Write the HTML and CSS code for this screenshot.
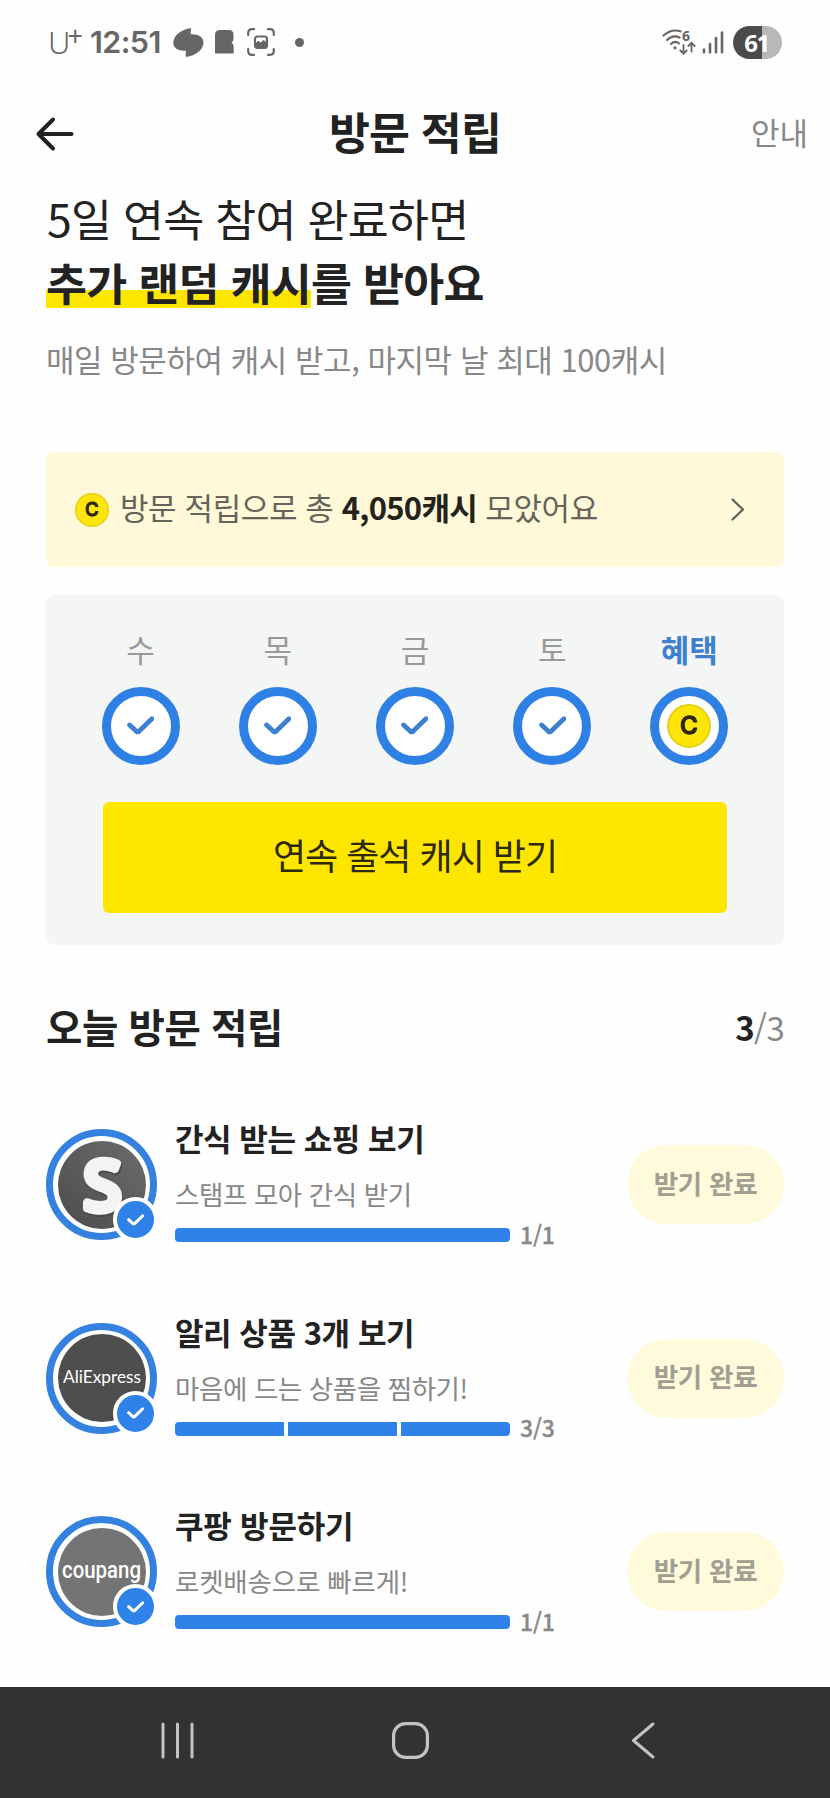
FILE: index.html
```html
<!DOCTYPE html>
<html lang="ko">
<head>
<meta charset="utf-8">
<title>방문 적립</title>
<link rel="stylesheet" href="styles.css">
</head>
<body>
<svg class="defs" aria-hidden="true">
  <defs>
    <symbol id="tick" viewBox="0 0 26 18"><path d="M2.5 8.5 L9 14.6 Q10.3 15.7 11.6 14.6 L24 2.5" fill="none" stroke="currentColor" stroke-width="4.6" stroke-linecap="round" stroke-linejoin="round"/></symbol>
    <symbol id="coin" viewBox="0 0 44 44"><circle cx="22" cy="22" r="21" fill="#ffe50a" stroke="#e6d015" stroke-width="2"/><text x="21.7" y="30.3" class="coin-letter">C</text></symbol>
  </defs>
</svg>
<div class="screen">
  <div class="status">
    <span class="carrier">U<sup>+</sup></span>
    <span class="clock">12:51</span>
    <svg class="ic-swirl" width="31" height="29" viewBox="0 0 31 29"><path d="M18 0 L17.7 6.3 C24 5.6 30.5 8.5 30.5 14.5 C30.5 22 22 28.5 12.5 28.8 L13 22.7 C6 23.3 .3 20.5 .3 14.8 C.3 7 9 1.300 18 0Z" fill="#666"/></svg>
    <svg class="ic-app" width="19" height="24" viewBox="0 0 19 24"><path d="M0 5 Q0 0 5 0 H14 Q18.500 0 18.500 5 V9 Q18.500 11.500 16.500 12.500 Q18.700 14 18.700 16.500 V23.500 H0Z" fill="#666"/></svg>
    <svg class="ic-shot" width="28" height="28" viewBox="0 0 28 28"><g fill="none" stroke="#666" stroke-width="2.200" stroke-linecap="round"><path d="M1.200 7 V5 Q1.200 1.200 5 1.200 H7M21 1.200 H23 Q26.800 1.200 26.800 5 V7M26.800 21 V23 Q26.800 26.800 23 26.800 H21M7 26.800 H5 Q1.200 26.800 1.200 23 V21"/><rect x="8" y="8.500" width="12" height="11.500" rx="2.500"/></g><path d="M8 15.500 L11.500 12.800 L13.500 14.500 L16.500 12 L20 14.500 V20 H8Z" fill="#666"/></svg>
    <i class="dot"></i>
    <svg class="ic-wifi" width="34" height="26" viewBox="0 0 34 26"><g fill="none" stroke="#666" stroke-width="2.200" stroke-linecap="round"><path d="M1.500 6.500 Q9.500 -.5 18.500 2.300M5 11 Q11 5.500 17.500 8.500M9 15 Q13 11.300 17 14.300"/><path d="M21.500 16 V24.500M18.300 21.500 L21.500 24.700 L24.700 21.500M29.500 22.500 V14M26.300 17 L29.500 13.800 L32.700 17" stroke-width="1.800"/></g><circle cx="13" cy="18.800" r="1.600" fill="#666"/><text x="20" y="12" class="wifi-gen">6</text></svg>
    <svg class="ic-signal" width="22" height="23" viewBox="0 0 22 23"><g stroke="#666" stroke-width="2.600" stroke-linecap="round"><path d="M2 18.500 V21.200M8 13 V21.200M14 7 V21.200M20 1.500 V21.200"/></g></svg>
    <span class="battery">61</span>
  </div>

  <header class="appbar">
    <svg class="back" width="38" height="34" viewBox="0 0 38 34"><path d="M35.500 17 H3M17 2.500 L2.500 17 L17 31.500" fill="none" stroke="#222" stroke-width="4" stroke-linecap="round" stroke-linejoin="round"/></svg>
    <h1>방문 적립</h1>
    <a class="guide">안내</a>
  </header>

  <section class="intro">
    <p class="lead">5일 연속 참여 완료하면</p>
    <p class="lead strong"><mark>추가 랜덤 캐시</mark>를 받아요</p>
    <p class="note">매일 방문하여 캐시 받고, 마지막 날 최대 100캐시</p>
  </section>

  <a class="total">
    <svg class="coin-sm" width="34" height="34"><use href="#coin"/></svg>
    <span class="total-text">방문 적립으로 총 <b>4,050캐시</b> 모았어요</span>
    <svg class="chevron" width="14" height="23" viewBox="0 0 14 23"><path d="M1.500 1.500 L12 11.500 L1.500 21.500" fill="none" stroke="#5f5e55" stroke-width="2.200" stroke-linecap="round" stroke-linejoin="round"/></svg>
  </a>

  <section class="streak">
    <div class="days">
      <div class="day"><span>수</span><div class="ring"><svg width="27" height="19"><use href="#tick"/></svg></div></div>
      <div class="day"><span>목</span><div class="ring"><svg width="27" height="19"><use href="#tick"/></svg></div></div>
      <div class="day"><span>금</span><div class="ring"><svg width="27" height="19"><use href="#tick"/></svg></div></div>
      <div class="day"><span>토</span><div class="ring"><svg width="27" height="19"><use href="#tick"/></svg></div></div>
      <div class="day bonus"><span>혜택</span><div class="ring"><svg width="44" height="44"><use href="#coin"/></svg></div></div>
    </div>
    <button class="claim">연속 출석 캐시 받기</button>
  </section>

  <div class="section-head"><h2>오늘 방문 적립</h2><span class="count"><b>3</b>/3</span></div>

  <ul class="missions">
    <li class="mission">
      <div class="avatar">
        <svg width="88" height="88" viewBox="0 0 88 88"><linearGradient id="logo-dark" x1="0" y1="1" x2="1" y2="0"><stop offset="0" stop-color="#4c4c4c"/><stop offset="1" stop-color="#6c6c6c"/></linearGradient><circle cx="44" cy="44" r="44" fill="url(#logo-dark)"/><text x="45.500" y="70.500" class="s-shadow" aria-hidden="true">S</text><text x="44.500" y="68.500" class="s-logo">S</text></svg>
        <div class="badge"><svg width="17" height="12"><use href="#tick"/></svg></div>
      </div>
      <div class="info"><h3>간식 받는 쇼핑 보기</h3><p>스탬프 모아 간식 받기</p><div class="progress"><div class="bar"><i></i></div><span>1/1</span></div></div>
      <button class="done">받기 완료</button>
    </li>
    <li class="mission">
      <div class="avatar">
        <svg width="88" height="88" viewBox="0 0 88 88"><circle cx="44" cy="44" r="44" fill="#4e4e4e"/><text x="44" y="49" class="ali" textLength="78" lengthAdjust="spacingAndGlyphs">AliExpress</text></svg>
        <div class="badge"><svg width="17" height="12"><use href="#tick"/></svg></div>
      </div>
      <div class="info"><h3>알리 상품 3개 보기</h3><p>마음에 드는 상품을 찜하기!</p><div class="progress"><div class="bar"><i></i><i></i><i></i></div><span>3/3</span></div></div>
      <button class="done">받기 완료</button>
    </li>
    <li class="mission">
      <div class="avatar">
        <svg width="88" height="88" viewBox="0 0 88 88"><circle cx="44" cy="44" r="44" fill="#747474"/><text x="43.500" y="50" class="cou" textLength="79" lengthAdjust="spacingAndGlyphs">coupang</text></svg>
        <div class="badge"><svg width="17" height="12"><use href="#tick"/></svg></div>
      </div>
      <div class="info"><h3 class="loose">쿠팡 방문하기</h3><p class="loose">로켓배송으로 빠르게!</p><div class="progress"><div class="bar"><i></i></div><span>1/1</span></div></div>
      <button class="done">받기 완료</button>
    </li>
  </ul>

  <nav class="sysnav">
    <svg width="34" height="37" viewBox="0 0 34 37"><path d="M2 2 V35M16.500 2 V35M31 2 V35" stroke="#c4c2c2" stroke-width="3" stroke-linecap="round"/></svg>
    <svg class="home" width="37" height="37" viewBox="0 0 37 37"><rect x="1.600" y="1.600" width="33.800" height="33.800" rx="12" fill="none" stroke="#c4c2c2" stroke-width="3.200"/></svg>
    <svg width="24" height="37" viewBox="0 0 24 37"><path d="M22 2 L2.500 18.500 L22 35" fill="none" stroke="#c4c2c2" stroke-width="3" stroke-linecap="round" stroke-linejoin="round"/></svg>
  </nav>
</div>
</body>
</html>
```
FILE: styles.css
```css
* { box-sizing: border-box; }
body, h1, h2, h3, p, ul { margin: 0; padding: 0; }
body {
  background: #fefefe;
  color: #222;
  font-family: "Noto Sans CJK KR", "Noto Sans", sans-serif;
}
button { border: 0; padding: 0; font-family: inherit; }
svg { display: block; flex: none; overflow: visible; }
.defs { display: none; }
.screen {
  width: 830px;
  height: 1798px;
  display: flex;
  flex-direction: column;
  overflow: hidden;
  white-space: nowrap;
}
.screen > * { flex-shrink: 0; }

/* status bar */
.status {
  height: 84px;
  padding: 0 48px 0 48px;
  display: flex;
  align-items: center;
  color: #666;
  font-family: "Noto Sans", sans-serif;
}
.carrier { width: 42px; font: 300 31px/30px "Noto Sans", sans-serif; }
.carrier sup { font-size: 27px; line-height: 0; vertical-align: 8px; margin-left: -3px; font-weight: 400; }
.clock { width: 83px; font: 600 30.500px/30px "Inter", sans-serif; letter-spacing: -.6px; }
.ic-app { margin-left: 11px; }
.ic-shot { margin-left: 13px; }
.dot { width: 9px; height: 9px; border-radius: 50%; background: #666; margin-left: 20px; }
.ic-wifi { margin-left: auto; }
.wifi-gen { font: 700 14px "Noto Sans", sans-serif; fill: #666; }
.ic-signal { margin-left: 6px; }
.battery {
  width: 49px;
  height: 33px;
  margin-left: 9px;
  padding-right: 2px;
  border-radius: 17px;
  background: linear-gradient(90deg, #4b4b4b 60%, #b8b8b8 60%);
  color: #fff;
  font: 700 24px/33px "Noto Sans", sans-serif;
  text-align: center;
  letter-spacing: -1.500px;
}

/* app bar */
.appbar {
  height: 98px;
  padding: 0 22px;
  display: grid;
  grid-template-columns: 1fr auto 1fr;
  align-items: center;
}
.back { margin: 2px 0 0 14px; }
.appbar h1 { font-size: 44.500px; font-weight: 700; line-height: 60px; letter-spacing: -.8px; margin-top: -4px; }
.guide { justify-self: end; color: #888; font-size: 31px; line-height: 40px; margin-top: -3px; }

/* intro */
.intro { padding: 4px 46px 0 47px; height: 270px; }
.lead { font-size: 44.500px; line-height: 64px; letter-spacing: -.7px; }
.lead.strong { font-weight: 700; margin-left: -1px; }
mark { color: inherit; background: linear-gradient(transparent 41px, #ffe600 41px, #ffe600 59px, transparent 59px); }
.note { margin-top: 22px; color: #888; font-size: 31px; line-height: 46px; letter-spacing: -.47px; margin-left: -1px; }

/* collected total */
.total {
  height: 115px;
  margin: 0 46px;
  padding: 0 39px 0 29px;
  display: flex;
  align-items: center;
  background: #fff9d9;
  border-radius: 8px;
  color: #66645a;
}
.total-text { margin: -5px 0 0 11px; font-size: 31px; line-height: 46px; letter-spacing: -.4px; }
.total-text b { color: #24221a; letter-spacing: -.7px; }
.chevron { margin-left: auto; }
.coin-letter { font: 500 24px "Inter", sans-serif; fill: #2a2618; stroke: #2a2618; stroke-width: 1.300px; stroke-linejoin: round; text-anchor: middle; }

/* five-day streak */
.streak {
  height: 350px;
  margin: 28px 46px 0;
  padding: 32px 26px 0;
  background: #f4f5f5;
  border-radius: 9px;
}
.days { display: grid; grid-template-columns: repeat(5, 137.200px); }
.day { display: flex; flex-direction: column; align-items: center; color: #999; font-size: 31px; line-height: 44px; }
.bonus { color: #3d80cf; font-weight: 700; }
.ring {
  width: 78px;
  height: 78px;
  margin-top: 16px;
  border: 9px solid #2f80e4;
  border-radius: 50%;
  background: #fff;
  color: #3d80cf;
  display: grid;
  place-items: center;
}
.ring svg { margin-top: -1px; }
.bonus .ring svg { margin-top: 0; }
.claim {
  display: block;
  width: 624px;
  height: 111px;
  margin: 37px auto 0;
  padding-bottom: 8px;
  border-radius: 6px;
  background: #ffe600;
  color: #2d290b;
  font-size: 36px;
  letter-spacing: -1px;
}

/* today's missions */
.section-head {
  height: 174px;
  padding: 49px 46px 0;
  display: flex;
  justify-content: space-between;
}
.section-head h2 { font-size: 39.500px; line-height: 64px; font-weight: 700; letter-spacing: -.4px; }
.count { color: #888; font-size: 33px; line-height: 66px; letter-spacing: -.7px; }
.count b { color: #222; }
.missions { list-style: none; height: 568px; padding: 0 46px; }
.mission { height: 193.700px; display: flex; }
.avatar {
  position: relative;
  width: 111px;
  height: 111px;
  margin-top: 10px;
  border: 7px solid #3481df;
  border-radius: 50%;
  display: grid;
  place-items: center;
}
.badge {
  position: absolute;
  right: -8px;
  bottom: -9px;
  width: 45px;
  height: 45px;
  border: 4px solid #fff;
  border-radius: 50%;
  background: #2f82e8;
  color: #fff;
  display: grid;
  place-items: center;
}
.s-logo, .s-shadow { font: 400 68px "Noto Sans", sans-serif; text-anchor: middle; stroke-width: 8.500px; stroke-linejoin: round; }
.s-logo { fill: #f4f4f4; stroke: #f4f4f4; }
.s-shadow { fill: #484848; stroke: #484848; }
.ali { font: 400 17.500px "Lato", sans-serif; fill: #fff; text-anchor: middle; }
.cou { font: 500 23px "Roboto", sans-serif; fill: #fff; text-anchor: middle; }
.info { width: 440px; margin-left: 18px; }
.info h3 { font-size: 31px; line-height: 42px; font-weight: 700; margin-top: -2px; letter-spacing: -.45px; }
.info p { color: #888; font-size: 26.500px; line-height: 38px; margin-top: 16px; letter-spacing: -.42px; }
.info h3.loose { letter-spacing: -.2px; }
.info p.loose { letter-spacing: -.2px; }
.progress { display: flex; align-items: center; margin-top: 2px; height: 40px; }
.bar { width: 335px; height: 14px; display: flex; gap: 4px; border-radius: 4px; overflow: hidden; }
.bar i { flex: 1; background: #2f82e8; }
.progress span { margin: -3px 0 0 10px; color: #888; font-size: 23px; font-weight: 500; line-height: 40px; letter-spacing: -.2px; -webkit-text-stroke: .3px #888; }
.done {
  width: 157px;
  height: 79px;
  margin: 26px 0 0 auto;
  padding-bottom: 5px;
  border-radius: 40px;
  background: #fffadb;
  color: #a19f91;
  font-size: 26.500px;
  font-weight: 700;
  letter-spacing: -.3px;
}

/* system navigation */
.sysnav {
  height: 111px;
  padding: 0 175px 4px 161px;
  display: flex;
  align-items: center;
  justify-content: space-between;
  background: #323232;
}
.home { margin-right: 6px; }
```
